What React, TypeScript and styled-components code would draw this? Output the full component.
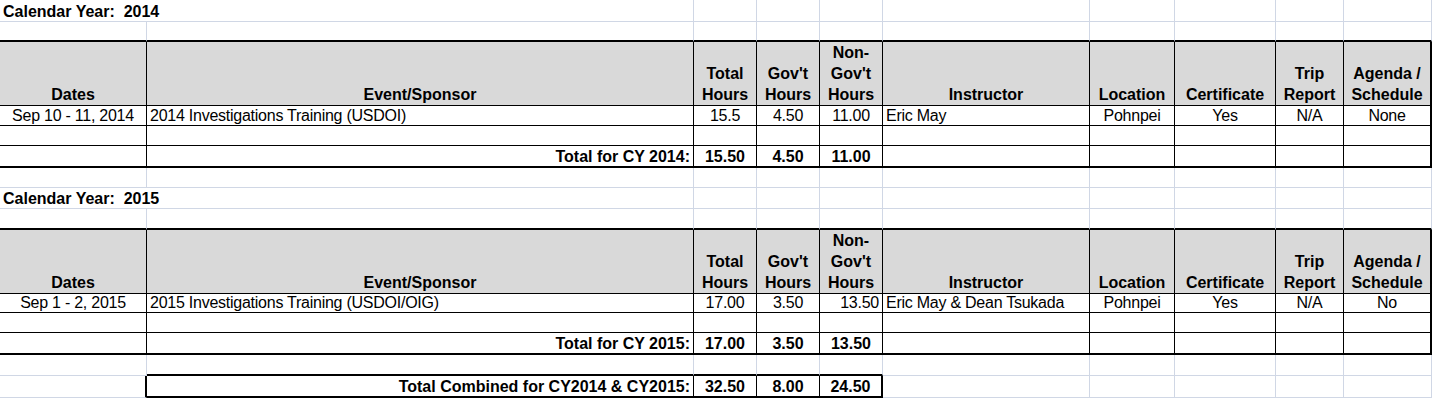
import React from 'react';
import styled, {createGlobalStyle} from 'styled-components';

type Edge = 'grid' | 'thin' | 'thick';
type Align = 'left' | 'center' | 'right';

const GRID = '#d0d7e5';

const edge = (e: Edge) =>
  e === 'thick' ? '2px solid #000' : e === 'thin' ? '1px solid #000' : `1px solid ${GRID}`;

const justify = (a: Align) =>
  a === 'left' ? 'flex-start' : a === 'right' ? 'flex-end' : 'center';

interface YearData {
  year: number;
  heights: {title: number; gap: number; head: number};
  entry: string[];
  nonGovAlign: Align;
  totals: string[];
}

const years: YearData[] = [
  {
    year: 2014,
    heights: {title: 22, gap: 20, head: 64},
    entry: [
      'Sep 10 - 11, 2014',
      '2014 Investigations Training (USDOI)',
      '15.5',
      '4.50',
      '11.00',
      'Eric May',
      'Pohnpei',
      'Yes',
      'N/A',
      'None',
    ],
    nonGovAlign: 'center',
    totals: ['15.50', '4.50', '11.00'],
  },
  {
    year: 2015,
    heights: {title: 21, gap: 21, head: 63},
    entry: [
      'Sep 1 - 2, 2015',
      '2015 Investigations Training (USDOI/OIG)',
      '17.00',
      '3.50',
      '13.50',
      'Eric May & Dean Tsukada',
      'Pohnpei',
      'Yes',
      'N/A',
      'No',
    ],
    nonGovAlign: 'right',
    totals: ['17.00', '3.50', '13.50'],
  },
];

const headers: string[][] = [
  ['Dates'],
  ['Event/Sponsor'],
  ['Total', 'Hours'],
  ["Gov't", 'Hours'],
  ['Non-', "Gov't", 'Hours'],
  ['Instructor'],
  ['Location'],
  ['Certificate'],
  ['Trip', 'Report'],
  ['Agenda /', 'Schedule'],
];

const entryAlign: Align[] = [
  'center', 'left', 'center', 'center', 'center', 'left', 'center', 'center', 'center', 'center',
];

const COLUMNS = 10;
const range = (n: number) => Array.from({length: n}, (_, i) => i);

const App = () => {
  return (
    <>
      <GlobalStyle />
      <Sheet>
        {years.map((y, yi) => (
          <React.Fragment key={y.year}>
            <Row $h={y.heights.title}>
              <Cell $span={2} $align="left" $bold $pre>
                {`Calendar Year:  ${y.year}`}
              </Cell>
              {range(COLUMNS - 2).map((i) => (
                <Cell key={i} />
              ))}
            </Row>

            <Row $h={y.heights.gap}>
              {range(COLUMNS).map((i) => (
                <Cell key={i} $b="thick" />
              ))}
            </Row>

            <Row $h={y.heights.head}>
              {headers.map((lines, i) => (
                <HeadCell key={i} $r={i === COLUMNS - 1 ? 'thick' : 'thin'} $b="thin">
                  <HeadText>
                    {lines.map((l, li) => (
                      <React.Fragment key={li}>
                        {li > 0 && <br />}
                        {l}
                      </React.Fragment>
                    ))}
                  </HeadText>
                </HeadCell>
              ))}
            </Row>

            <Row $h={20}>
              {y.entry.map((text, i) => (
                <Cell
                  key={i}
                  $r={i === COLUMNS - 1 ? 'thick' : 'thin'}
                  $b="thin"
                  $align={i === 4 ? y.nonGovAlign : entryAlign[i]}
                >
                  {text}
                </Cell>
              ))}
            </Row>

            <Row $h={20}>
              {range(COLUMNS).map((i) => (
                <Cell key={i} $r={i === COLUMNS - 1 ? 'thick' : 'thin'} $b="thin" />
              ))}
            </Row>

            <Row $h={22}>
              <Cell $r="thin" $b="thick" />
              <Cell $r="thin" $b="thick" $align="right" $bold>
                {`Total for CY ${y.year}:`}
              </Cell>
              {y.totals.map((t, i) => (
                <Cell key={i} $r="thin" $b="thick" $bold>
                  {t}
                </Cell>
              ))}
              {range(5).map((i) => (
                <Cell key={i} $r={i === 4 ? 'thick' : 'thin'} $b="thick" />
              ))}
            </Row>

            {yi === 0 && (
              <Row $h={20}>
                {range(COLUMNS).map((i) => (
                  <Cell key={i} />
                ))}
              </Row>
            )}
          </React.Fragment>
        ))}

        <Row $h={21}>
          {range(COLUMNS).map((i) => (
            <Cell key={i} $b={i >= 1 && i <= 4 ? 'thick' : 'grid'} />
          ))}
        </Row>

        <Row $h={22}>
          <Cell $r="thick" />
          <Cell $r="thin" $b="thick" $align="right" $bold>
            Total Combined for CY2014 &amp; CY2015:
          </Cell>
          <Cell $r="thin" $b="thick" $bold>32.50</Cell>
          <Cell $r="thin" $b="thick" $bold>8.00</Cell>
          <Cell $r="thick" $b="thick" $bold>24.50</Cell>
          {range(5).map((i) => (
            <Cell key={i} />
          ))}
        </Row>
      </Sheet>
    </>
  );
};

export default App;

const GlobalStyle = createGlobalStyle`
  body {
    margin: 0;
    background: #fff;
  }
`;

const Sheet = styled.div`
  width: 1432px;
  height: 398px;
  overflow: hidden;
  font-family: 'Liberation Sans', Arial, sans-serif;
  color: #000;
`;

const Row = styled.div<{$h: number}>`
  display: grid;
  grid-template-columns: 147px 547px 63px 63px 63px 207px 85px 101px 68px 88px;
  height: ${(p) => p.$h}px;
`;

const Cell = styled.div<{
  $r?: Edge;
  $b?: Edge;
  $align?: Align;
  $bold?: boolean;
  $span?: number;
  $pre?: boolean;
}>`
  box-sizing: border-box;
  min-width: 0;
  grid-column: span ${(p) => p.$span ?? 1};
  display: flex;
  align-items: flex-end;
  justify-content: ${(p) => justify(p.$align ?? 'center')};
  padding: 0 3px;
  border-right: ${(p) => edge(p.$r ?? 'grid')};
  border-bottom: ${(p) => edge(p.$b ?? 'grid')};
  font-size: 16px;
  font-weight: ${(p) => (p.$bold ? 700 : 400)};
  letter-spacing: ${(p) => (p.$bold ? '0' : '-0.25px')};
  line-height: 18px;
  white-space: ${(p) => (p.$pre ? 'pre' : 'nowrap')};
`;

const HeadCell = styled(Cell)`
  background: #d9d9d9;
  font-weight: 700;
  letter-spacing: 0;
  line-height: 21px;
`;

const HeadText = styled.span`
  display: block;
  text-align: center;
`;
